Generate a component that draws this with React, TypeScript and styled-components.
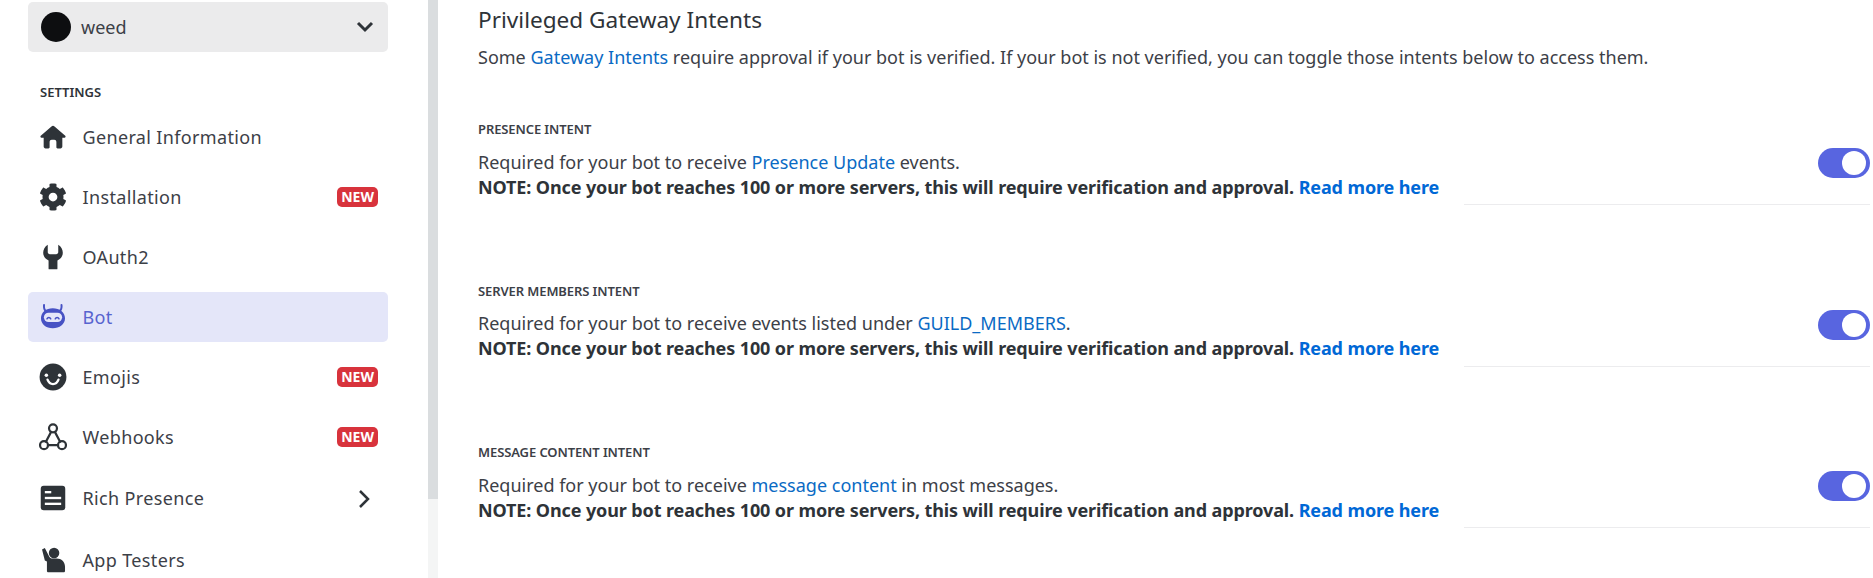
import styled, { createGlobalStyle } from 'styled-components';
import { FaCog } from 'react-icons/fa';
import type { ReactNode } from 'react';

const GlobalStyle = createGlobalStyle`
    html, body {
        margin: 0;
        height: 100%;
        overflow: hidden;
        background: #ffffff;
    }
    body {
        font-family: 'Noto Sans', 'Liberation Sans', sans-serif;
        color: #2e3338;
    }
`;

const Page = styled.div`
    display: flex;
    height: 578px;
    overflow: hidden;
`;

const Sidebar = styled.aside`
    width: 428px;
    flex: none;
    box-sizing: border-box;
    padding: 2px 40px 0 28px;
    overflow: hidden;
`;

const Selector = styled.div`
    display: flex;
    align-items: center;
    height: 50px;
    padding: 0 13px;
    gap: 10px;
    border-radius: 5px;
    background: #ebebec;
    color: #3c4047;
    font-size: 18px;
`;

const Avatar = styled.span`
    width: 30px;
    height: 30px;
    border-radius: 50%;
    background: #0d0e10;
`;

const SelectorChevron = styled.svg`
    width: 24px;
    height: 24px;
    margin-left: auto;
    margin-right: -2px;
    color: #2e3338;
`;

const SectionTitle = styled.div`
    margin: 31px 0 11px 12px;
    font-size: 13px;
    line-height: 18px;
    font-weight: 600;
    color: #2e3338;
`;

const Nav = styled.nav`
    display: flex;
    flex-direction: column;
    gap: 10px;
`;

const NavItem = styled.div<{ $active?: boolean }>`
    display: flex;
    align-items: center;
    flex: none;
    height: 50px;
    padding: 0 10px 0 11px;
    border-radius: 5px;
    font-size: 18px;
    letter-spacing: 0.35px;
    color: ${(p) => (p.$active ? '#5763cf' : '#3c4047')};
    background: ${(p) => (p.$active ? '#e4e6f9' : 'transparent')};
    &:nth-child(7) {
        margin-top: 1px;
    }
    &:nth-child(8) {
        margin-top: 2px;
    }
`;

const NavIcon = styled.span<{ $active?: boolean }>`
    display: flex;
    align-items: center;
    justify-content: center;
    width: 28px;
    height: 28px;
    margin-right: 15.5px;
    color: ${(p) => (p.$active ? '#4752c4' : '#2e3338')};
    svg {
        width: 28px;
        height: 28px;
    }
`;

const Badge = styled.span`
    margin-left: auto;
    padding: 0 4px;
    height: 20px;
    line-height: 20px;
    border-radius: 5px;
    background: #d8333c;
    color: #ffffff;
    font-size: 14px;
    font-weight: 700;
    letter-spacing: 0;
`;

const ItemChevron = styled.svg`
    width: 24px;
    height: 24px;
    margin-left: auto;
    margin-right: 2px;
    color: #2e3338;
`;

const Scrollbar = styled.div`
    width: 10px;
    flex: none;
    background: #f4f5f5;
`;

const ScrollThumb = styled.div`
    height: 499px;
    background: #dadddf;
`;

const Main = styled.main`
    flex: 1;
    min-width: 0;
    padding: 0 3px 0 40px;
`;

const Heading = styled.h2`
    margin: 5px 0 0;
    font-size: 22.6px;
    line-height: 30px;
    font-weight: 400;
    color: #2e3338;
`;

const Intro = styled.p`
    margin: 10px 0 0;
    font-size: 18px;
    line-height: 24px;
    color: #3c4047;
`;

const Intent = styled.section`
    display: flex;
    height: 161.5px;
    &:first-of-type {
        margin-top: 51px;
    }
`;

const IntentText = styled.div`
    flex: none;
    width: 986px;
`;

const IntentLabel = styled.h3`
    margin: 0 0 11.5px;
    font-size: 13px;
    line-height: 18px;
    font-weight: 600;
    letter-spacing: -0.1px;
    color: #3c4047;
`;

const IntentLine = styled.div`
    font-size: 18px;
    line-height: 25px;
    color: #3c4047;
`;

const NoteLine = styled.div`
    font-size: 18px;
    line-height: 25px;
    font-weight: 700;
    letter-spacing: -0.115px;
    color: #2e3338;
`;

const TextLink = styled.a`
    color: #0a6ac4;
`;

const StrongLink = styled.a`
    color: #0068d6;
`;

const IntentControl = styled.div`
    flex: 1;
    height: 85px;
    display: flex;
    justify-content: flex-end;
    align-items: flex-start;
    padding-top: 28px;
    box-sizing: border-box;
    border-bottom: 1px solid #ececee;
`;

const Toggle = styled.span`
    display: flex;
    align-items: center;
    justify-content: flex-end;
    width: 52px;
    height: 30px;
    padding: 0 4px;
    box-sizing: border-box;
    border-radius: 15px;
    background: #5865e0;
    &::after {
        content: '';
        width: 24px;
        height: 24px;
        border-radius: 50%;
        background: #ffffff;
    }
`;

const HomeIcon = () => (
    <svg viewBox="0 0 24 24" fill="currentColor">
        <path d="M10.700 2.900a2 2 0 0 1 2.600 0l9.200 8.100c.6.6.2 1.600-.6 1.600H20v7.600c0 .9-.7 1.600-1.600 1.600h-2.500c-.6 0-1-.4-1-1v-4.600c0-1-.8-1.800-1.800-1.800h-2.200c-1 0-1.800.8-1.800 1.800v4.600c0 .6-.4 1-1 1H5.600c-.9 0-1.600-.7-1.600-1.600v-7.600H2.100c-.8 0-1.200-1-.6-1.600z" />
    </svg>
);

const WrenchIcon = () => (
    <svg viewBox="0 0 24 24" fill="currentColor">
        <path d="M7.500 1.500C5 3 3.600 5.600 3.600 8.400c0 3 1.900 5.500 4.600 6.500v7.200c0 .3.2.5.5.5h6.600c.3 0 .5-.2.500-.5v-7.200c2.700-1 4.600-3.500 4.600-6.500 0-2.800-1.400-5.400-3.900-6.900v6.300c0 1.100-.8 1.900-1.800 1.900H9.300c-1 0-1.800-.8-1.800-1.900z" />
    </svg>
);

const BotIcon = () => (
    <svg viewBox="0 0 24 24" fill="currentColor">
        <path d="M4.300 1.800c-.3 2.400.3 4.200 2 5.400M19.300 1.800c.3 2.400-.3 4.200-2 5.400" fill="none" stroke="currentColor" strokeWidth="1.700" strokeLinecap="round" />
        <path d="M11.800 4.500C6 4.500 1.700 8 1.700 13.100s4.300 8.600 10.100 8.600 10.500-3.500 10.500-8.600-4.700-8.600-10.500-8.600z" />
        <rect x="4.200" y="8.300" width="15.600" height="8" rx="4" fill="#e4e6f9" />
        <path d="M6.900 13.500c.6-1.400 2.500-1.400 3.100 0M14 13.500c.6-1.400 2.500-1.400 3.100 0" fill="none" stroke="currentColor" strokeWidth="1.400" strokeLinecap="round" />
    </svg>
);

const EmojiIcon = () => (
    <svg viewBox="0 0 24 24" fill="currentColor">
        <circle cx="12" cy="12" r="11.500" />
        <circle cx="6.300" cy="10.500" r="1.500" fill="#ffffff" />
        <circle cx="17.700" cy="10.500" r="1.500" fill="#ffffff" />
        <path d="M7.300 14.300c1 2.600 2.800 3.800 4.700 3.800s3.700-1.200 4.700-3.800" fill="none" stroke="#ffffff" strokeWidth="2" strokeLinecap="round" />
    </svg>
);

const WebhookIcon = () => (
    <svg viewBox="0 0 24 24" fill="none" stroke="currentColor" strokeWidth="1.900" strokeLinecap="round" strokeLinejoin="round">
        <circle cx="12" cy="4.600" r="3.400" />
        <circle cx="4.300" cy="19" r="3.400" />
        <circle cx="19.700" cy="19" r="3.400" />
        <path d="M10.400 7.600 5.900 16M13.600 7.600 18.100 16M7.700 19h8.600" />
    </svg>
);

const PresenceIcon = () => (
    <svg viewBox="0 0 24 24" fill="currentColor">
        <rect x="1.500" y="1.500" width="21" height="21" rx="2.500" />
        <rect x="5" y="6" width="5.500" height="2" fill="#ffffff" />
        <rect x="5" y="11" width="14" height="2" fill="#ffffff" />
        <rect x="5" y="16" width="14" height="2" fill="#ffffff" />
    </svg>
);

const TesterIcon = () => (
    <svg viewBox="0 0 24 24" fill="currentColor">
        <circle cx="12.900" cy="6" r="4.500" />
        <path d="M2.600 3 5 1.700 8.600 8.700c.6 1.200 1.500 2 3 2h3.500c4.200 0 7.200 3 7.200 7v4c0 .4-.3.700-.7.700H7.500c-.4 0-.7-.3-.7-.7v-8.400L5 12.500z" />
    </svg>
);

type NavEntry = {
    label: string;
    icon: ReactNode;
    badge?: boolean;
    active?: boolean;
    arrow?: boolean;
};

const navItems: NavEntry[] = [
    { label: 'General Information', icon: <HomeIcon /> },
    { label: 'Installation', icon: <FaCog />, badge: true },
    { label: 'OAuth2', icon: <WrenchIcon /> },
    { label: 'Bot', icon: <BotIcon />, active: true },
    { label: 'Emojis', icon: <EmojiIcon />, badge: true },
    { label: 'Webhooks', icon: <WebhookIcon />, badge: true },
    { label: 'Rich Presence', icon: <PresenceIcon />, arrow: true },
    { label: 'App Testers', icon: <TesterIcon /> },
];

type IntentEntry = {
    label: string;
    before: string;
    link: string;
    after: string;
};

const intents: IntentEntry[] = [
    { label: 'PRESENCE INTENT', before: 'Required for your bot to receive ', link: 'Presence Update', after: ' events.' },
    { label: 'SERVER MEMBERS INTENT', before: 'Required for your bot to receive events listed under ', link: 'GUILD_MEMBERS', after: '.' },
    { label: 'MESSAGE CONTENT INTENT', before: 'Required for your bot to receive ', link: 'message content', after: ' in most messages.' },
];

export default function App() {
    return (
        <>
            <GlobalStyle />
            <Page>
                <Sidebar>
                    <Selector>
                        <Avatar />
                        <span>weed</span>
                        <SelectorChevron viewBox="0 0 24 24" fill="none" stroke="currentColor" strokeWidth="3">
                            <path d="m5 8 7 7 7-7" />
                        </SelectorChevron>
                    </Selector>
                    <SectionTitle>SETTINGS</SectionTitle>
                    <Nav>
                        {navItems.map((item) => (
                            <NavItem key={item.label} $active={item.active}>
                                <NavIcon $active={item.active}>{item.icon}</NavIcon>
                                <span>{item.label}</span>
                                {item.badge && <Badge>NEW</Badge>}
                                {item.arrow && (
                                    <ItemChevron viewBox="0 0 24 24" fill="none" stroke="currentColor" strokeWidth="2.500">
                                        <path d="m8 5 8 8-8 8" />
                                    </ItemChevron>
                                )}
                            </NavItem>
                        ))}
                    </Nav>
                </Sidebar>
                <Scrollbar>
                    <ScrollThumb />
                </Scrollbar>
                <Main>
                    <Heading>Privileged Gateway Intents</Heading>
                    <Intro>
                        Some <TextLink>Gateway Intents</TextLink> require approval if your bot is verified. If your bot is not verified, you can toggle those intents below to access them.
                    </Intro>
                    {intents.map((intent) => (
                        <Intent key={intent.label}>
                            <IntentText>
                                <IntentLabel>{intent.label}</IntentLabel>
                                <IntentLine>
                                    {intent.before}
                                    <TextLink>{intent.link}</TextLink>
                                    {intent.after}
                                </IntentLine>
                                <NoteLine>
                                    NOTE: Once your bot reaches 100 or more servers, this will require verification and approval. <StrongLink>Read more here</StrongLink>
                                </NoteLine>
                            </IntentText>
                            <IntentControl>
                                <Toggle />
                            </IntentControl>
                        </Intent>
                    ))}
                </Main>
            </Page>
        </>
    );
}
